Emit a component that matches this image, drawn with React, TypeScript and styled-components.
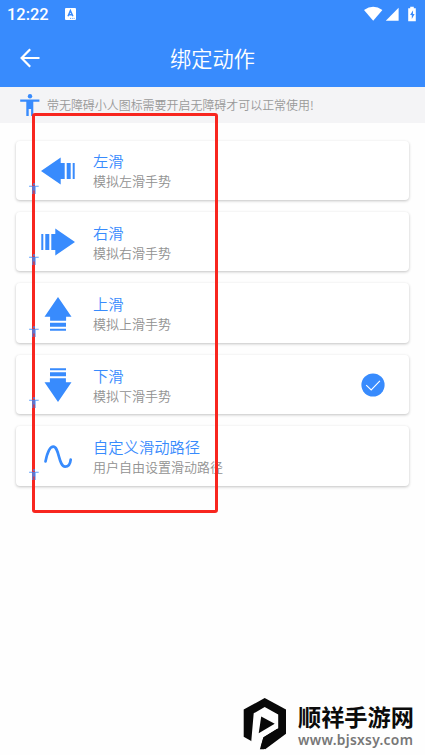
import React from 'react';
import styled, { createGlobalStyle } from 'styled-components';

const BLUE = '#388bfd';

const GlobalStyle = createGlobalStyle`
  * { box-sizing: border-box; }
  html, body { margin: 0; background: #fefefe; }
  body { font-family: "Noto Sans CJK SC", sans-serif; font-weight: 350; overflow: hidden; }
  svg { display: block; }
`;

const Screen = styled.div`
  position: relative;
  width: 425px;
  height: 755px;
  display: flex;
  flex-direction: column;
  background: #fefefe;
  overflow: hidden;
`;

const Header = styled.header`
  height: 87px;
  flex: none;
  background: ${BLUE};
  color: #fff;
`;

const StatusBar = styled.div`
  height: 29px;
  display: flex;
  align-items: center;
  padding: 0 8px 1px 7px;
`;

const Clock = styled.span`
  width: 58px;
  padding-top: 2px;
  font: 500 16.4px/20px Roboto, sans-serif;
`;

const StatusIcons = styled.div`
  margin-left: auto;
`;

const TitleBar = styled.div`
  height: 58px;
  display: grid;
  grid-template-columns: 60px 1fr 60px;
  align-items: center;
`;

const BackButton = styled.button`
  border: 0;
  padding: 0 0 0 20px;
  background: none;
`;

const Title = styled.h1`
  margin: 0;
  padding-bottom: 1px;
  text-align: center;
  font-size: 21.2px;
  line-height: 30px;
  font-weight: 350;
`;

const Notice = styled.div`
  height: 36px;
  flex: none;
  display: flex;
  align-items: center;
  gap: 7px;
  padding: 0 0 0 20px;
  background: #f4f4f6;
  color: #999;
  font-size: 11.96px;
  line-height: 18px;
  white-space: nowrap;
`;

const CardList = styled.main`
  display: flex;
  flex-direction: column;
  gap: 12.1px;
  padding: 17.5px 16px 0;
`;

const Card = styled.section`
  position: relative;
  height: 59.4px;
  display: flex;
  align-items: center;
  padding: 0 24px 0 22px;
  border-radius: 4px;
  background: #fff;
  box-shadow: 0 1px 3px rgba(0, 0, 0, 0.24);
`;

const IconSlot = styled.div`
  width: 40px;
  margin-right: 15px;
  padding-top: 1px;
`;

const CardText = styled.div`
  flex: 1;
  display: flex;
  flex-direction: column;
  white-space: nowrap;
`;

const CardTitle = styled.span`
  color: ${BLUE};
  font-size: 15.3px;
  line-height: 21px;
`;

const CardHint = styled.span`
  color: #919191;
  font-size: 13px;
  line-height: 19px;
`;

const Badge = styled.div`
  position: absolute;
  z-index: 2;
  left: 13px;
  bottom: 5.5px;
  opacity: 0.8;
`;

const Highlight = styled.div`
  position: absolute;
  left: 32px;
  top: 113px;
  width: 186px;
  height: 400px;
  border: 3px solid #f8261f;
  border-radius: 3px;
`;

const Brand = styled.div`
  position: absolute;
  left: 243px;
  top: 697px;
  display: flex;
  gap: 11px;
`;

const BrandText = styled.div`
  display: flex;
  flex-direction: column;
  padding-top: 5px;
  white-space: nowrap;
`;

const BrandName = styled.span`
  color: #0b0b0b;
  font-size: 23.2px;
  font-weight: 700;
  line-height: 29px;
`;

const BrandUrl = styled.span`
  color: #777;
  font: 600 13.8px/17px "Noto Sans", sans-serif;
  letter-spacing: 0.3px;
`;

const Person = ({ size }: { size: number }) => (
  <svg width={size} height={size * 1.15} viewBox="0 0 20 23" fill={BLUE}>
    <circle cx="10" cy="2.3" r="2.2" />
    <path d="M.2 5.5h19.2v2.2h-6.1V22h-2.2v-7H8.7v7H6.3V7.7H.2z" />
  </svg>
);

type Direction = 'left' | 'right' | 'up' | 'down';

const angle: Record<Direction, number> = { left: 0, right: 180, up: 90, down: 270 };

const Arrow = ({ direction }: { direction: Direction }) => (
  <svg width="40" height="40" viewBox="0 0 40 40" fill={BLUE}>
    <g transform={`rotate(${angle[direction]} 20 20)`}>
      <path d="M3 20 22.7 6.5v5.4h4v16h-4v5.6z" />
      <path d="M28.7 12h4v16h-4zM34.7 12h2v16h-2z" />
    </g>
  </svg>
);

const Wave = () => (
  <svg width="40" height="40" viewBox="0 0 40 40" fill="none" stroke={BLUE} strokeWidth="2.7" strokeLinecap="round">
    <path d="M7.5 24.5C9 17 11.5 9.7 15.3 9.7c6 0 5.2 20 11.8 20 3.3 0 5.2-3 5.6-7.1" />
  </svg>
);

const BackArrow = () => (
  <svg width="20" height="20" viewBox="0 0 20 20" fill="none" stroke="#fff" strokeWidth="2.2">
    <path d="M19.5 10H2M10.2 1.2 1.6 10l8.6 8.8" />
  </svg>
);

const InputIcon = () => (
  <svg width="11" height="12" viewBox="0 0 11 12">
    <rect width="11" height="12" rx="1" fill="#fff" />
    <path d="M3 8.3 5.4 2.7l2.5 5.6M3.8 6.7H7" fill="none" stroke={BLUE} strokeWidth="1.5" />
    <path d="M5 10.4h1M6.8 10.4h1M8.6 10.4h1" stroke={BLUE} strokeWidth=".8" />
  </svg>
);

const SystemIcons = () => (
  <svg width="53" height="16" viewBox="0 0 53 16" fill="#fff">
    <path d="M0 4.1Q9.2-2.5 18.4 4.1L9.2 14.8z" />
    <path d="M34.6 1.7v13H21.8z" />
    <path d="M44.2 2.2h2V.8h3.6v1.4h2v13h-7.6z" />
    <path d="m49.1 4.3-3 4.8h1.7v4l2.8-5h-1.7z" fill={BLUE} />
  </svg>
);

const Selected = () => (
  <svg width="24" height="24" viewBox="0 0 24 24">
    <circle cx="12" cy="12" r="11.6" fill={BLUE} />
    <path d="m5.2 12.2 5 4.7 8.7-9" fill="none" stroke="#fff" strokeWidth="1.1" />
  </svg>
);

const BrandMark = () => (
  <svg width="44" height="53" viewBox="0 0 44 53">
    <path d="M21.7 1 43 12.6v24.2L22.2 52.2.7 39.7V12.6z" fill="#080808" />
    <path d="M10.7 16.3 21.7 10 35.2 17.6v13.7L20.5 40.2 17.2 52 8 47.3z" fill="#fefefe" />
    <path d="M18.2 19.5 31.7 26.7 15.7 36.3z" fill="#080808" />
    <path d="M20.3 40.5 34 32v10.5L21 52.2h-4.1z" fill="#080808" />
  </svg>
);

const actions: { title: string; hint: string; icon: React.ReactNode; selected?: boolean }[] = [
  { title: '左滑', hint: '模拟左滑手势', icon: <Arrow direction="left" /> },
  { title: '右滑', hint: '模拟右滑手势', icon: <Arrow direction="right" /> },
  { title: '上滑', hint: '模拟上滑手势', icon: <Arrow direction="up" /> },
  { title: '下滑', hint: '模拟下滑手势', icon: <Arrow direction="down" />, selected: true },
  { title: '自定义滑动路径', hint: '用户自由设置滑动路径', icon: <Wave /> },
];

export default function App() {
  return (
    <Screen>
      <GlobalStyle />
      <Header>
        <StatusBar>
          <Clock>12:22</Clock>
          <InputIcon />
          <StatusIcons><SystemIcons /></StatusIcons>
        </StatusBar>
        <TitleBar>
          <BackButton aria-label="返回"><BackArrow /></BackButton>
          <Title>绑定动作</Title>
        </TitleBar>
      </Header>
      <Notice>
        <Person size={20} />
        <span>带无障碍小人图标需要开启无障碍才可以正常使用!</span>
      </Notice>
      <CardList>
        {actions.map((action) => (
          <Card key={action.title}>
            <IconSlot>{action.icon}</IconSlot>
            <CardText>
              <CardTitle>{action.title}</CardTitle>
              <CardHint>{action.hint}</CardHint>
            </CardText>
            {action.selected && <Selected />}
            <Badge><Person size={10} /></Badge>
          </Card>
        ))}
      </CardList>
      <Highlight />
      <Brand>
        <BrandMark />
        <BrandText>
          <BrandName>顺祥手游网</BrandName>
          <BrandUrl>www.bjsxsy.com</BrandUrl>
        </BrandText>
      </Brand>
    </Screen>
  );
}
